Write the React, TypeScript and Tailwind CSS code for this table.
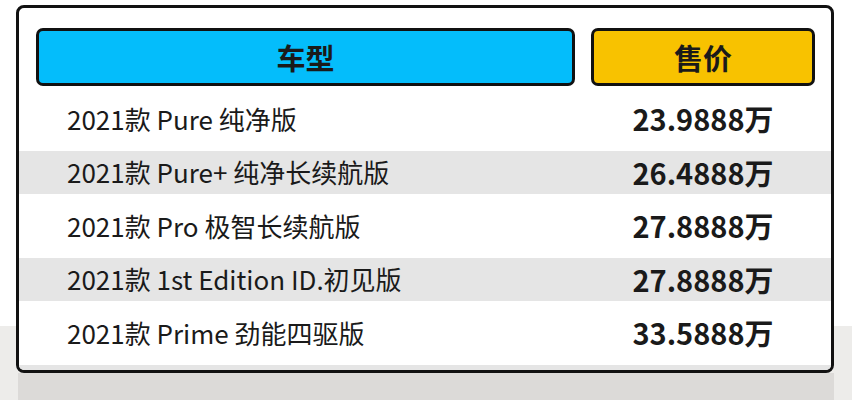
const rows = [
  { name: "2021款 Pure 纯净版", price: "23.9888万" },
  { name: "2021款 Pure+ 纯净长续航版", price: "26.4888万" },
  { name: "2021款 Pro 极智长续航版", price: "27.8888万" },
  { name: "2021款 1st Edition ID.初见版", price: "27.8888万" },
  { name: "2021款 Prime 劲能四驱版", price: "33.5888万" },
  { name: "", price: "" },
]

export default function App() {
  return (
    <div
      className="w-[852px] h-[400px] overflow-hidden flex flex-col bg-[linear-gradient(to_bottom,#ffffff_326px,#edecea_326px)] text-[#1a1a1a]"
      style={{ fontFamily: '"Noto Sans CJK SC", "Noto Sans", sans-serif' }}
    >
      {/* card */}
      <div className="mt-[5px] ml-[16px] w-[818px] h-[368px] border-[3px] border-[#111] rounded-[8px] bg-white overflow-hidden flex flex-col">
        {/* header */}
        <div className="flex gap-[16px] pl-[17px] pr-[16px] pt-[20px]">
          <div className="w-[539px] h-[58px] bg-[#04bdfb] border-[3px] border-[#111] rounded-[7px] flex items-center justify-center text-[29px] font-bold leading-none">
            车型
          </div>
          <div className="w-[224px] h-[58px] bg-[#f8c200] border-[3px] border-[#111] rounded-[7px] flex items-center justify-center text-[29px] font-semibold leading-none">
            售价
          </div>
        </div>

        {/* rows */}
        <div className="flex flex-col gap-[10.5px] pt-[11px]">
          {rows.map((r, i) => (
            <div
              key={i}
              className={`shrink-0 h-[43px] flex items-center gap-[16px] pl-[17px] pr-[16px] ${i % 2 === 1 ? "bg-[#e5e5e5]" : "bg-white"}`}
            >
              <div className="w-[539px] pl-[31px] text-[26px] leading-none whitespace-nowrap">{r.name}</div>
              <div className="w-[224px] text-center text-[29px] font-bold leading-none whitespace-nowrap">{r.price}</div>
            </div>
          ))}
        </div>
      </div>

      {/* shadow band under card */}
      <div className="ml-[18px] w-[816px] flex-1 bg-[#dcdad8]" />
    </div>
  )
}
